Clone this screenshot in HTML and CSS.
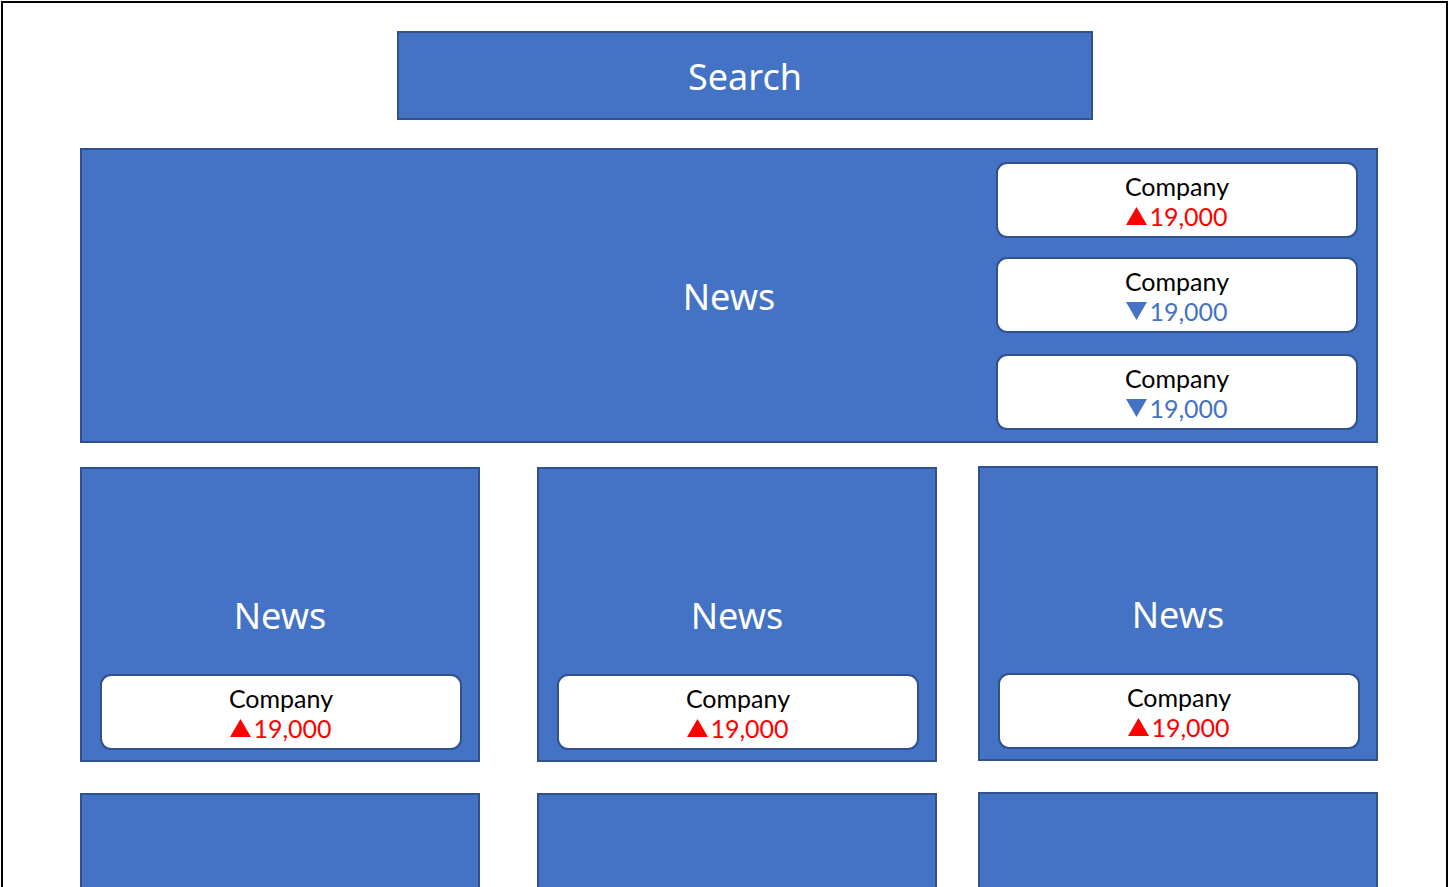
FILE: index.html
```html
<!DOCTYPE html>
<html lang="en">
<head>
<meta charset="utf-8">
<title>News Dashboard Wireframe</title>
<link rel="stylesheet" href="styles.css">
</head>
<body>
<div class="frame">
  <div class="search">Search</div>

  <div class="hero">
    <div class="hero-title">News</div>
    <div class="stock-list">
      <div class="stock">
        <div class="stock-name">Company</div>
        <div class="stock-value up"><svg class="tri" viewBox="0 0 20 17"><polygon points="10,0 20,17 0,17"/></svg>19,000</div>
      </div>
      <div class="stock">
        <div class="stock-name">Company</div>
        <div class="stock-value down"><svg class="tri" viewBox="0 0 20 17"><polygon points="0,0 20,0 10,17"/></svg>19,000</div>
      </div>
      <div class="stock stock-last">
        <div class="stock-name">Company</div>
        <div class="stock-value down"><svg class="tri" viewBox="0 0 20 17"><polygon points="0,0 20,0 10,17"/></svg>19,000</div>
      </div>
    </div>
  </div>

  <div class="row">
    <div class="tile">
      <div class="tile-title">News</div>
      <div class="stock tile-stock">
        <div class="stock-name">Company</div>
        <div class="stock-value up"><svg class="tri" viewBox="0 0 20 17"><polygon points="10,0 20,17 0,17"/></svg>19,000</div>
      </div>
    </div>
    <div class="tile tile-mid">
      <div class="tile-title">News</div>
      <div class="stock tile-stock">
        <div class="stock-name">Company</div>
        <div class="stock-value up"><svg class="tri" viewBox="0 0 20 17"><polygon points="10,0 20,17 0,17"/></svg>19,000</div>
      </div>
    </div>
    <div class="tile tile-last">
      <div class="tile-title">News</div>
      <div class="stock tile-stock">
        <div class="stock-name">Company</div>
        <div class="stock-value up"><svg class="tri" viewBox="0 0 20 17"><polygon points="10,0 20,17 0,17"/></svg>19,000</div>
      </div>
    </div>
  </div>

  <div class="row row-bottom">
    <div class="tile tile-cut"></div>
    <div class="tile tile-cut tile-mid"></div>
    <div class="tile tile-cut tile-last"></div>
  </div>
</div>
</body>
</html>
```

FILE: styles.css
```css
html, body {
  margin: 0;
  padding: 0;
  background: #ffffff;
  overflow: hidden;
}

body {
  font-family: "Noto Sans", "Open Sans", "Liberation Sans", sans-serif;
  width: 1450px;
  height: 887px;
}

.frame {
  box-sizing: border-box;
  margin: 1px 0 0 1px;
  width: 1447px;
  height: 886px;
  overflow: hidden;
  border: 2px solid #000000;
  border-bottom: none;
  padding: 28px 0 0 77px;
}

.search {
  box-sizing: border-box;
  margin-left: 317px;
  width: 696px;
  height: 89px;
  background: #4472c4;
  border: 2px solid #2f528f;
  color: #ffffff;
  font-size: 36px;
  display: flex;
  align-items: center;
  justify-content: center;
  padding-top: 2px;
}

.hero {
  box-sizing: border-box;
  margin-top: 28px;
  width: 1298px;
  height: 295px;
  background: #4472c4;
  border: 2px solid #2f528f;
  display: grid;
  grid-template-columns: 1fr auto;
}

.hero-title {
  grid-row: 1;
  grid-column: 1 / 3;
  align-self: center;
  justify-self: center;
  color: #ffffff;
  font-size: 36px;
  margin-top: 2px;
}

.stock-list {
  grid-row: 1;
  grid-column: 2;
  display: flex;
  flex-direction: column;
  padding: 12px 18px 0 0;
}

.stock {
  box-sizing: border-box;
  width: 362px;
  height: 76px;
  background: #ffffff;
  border: 2px solid #2f528f;
  border-radius: 11px;
  display: flex;
  flex-direction: column;
  align-items: center;
  justify-content: center;
  padding-top: 1px;
  margin-bottom: 19px;
  font-family: "Lato", "Noto Sans", sans-serif;
}

.stock-list .stock:nth-child(2) {
  margin-bottom: 21px;
}

.stock-last {
  margin-bottom: 0;
}

.stock-name {
  color: #000000;
  font-size: 25px;
  line-height: 30px;
}

.stock-value {
  font-size: 25px;
  line-height: 30px;
  display: flex;
  align-items: center;
}

.up {
  color: #ff0000;
}

.down {
  color: #4472c4;
}

.tri {
  width: 21px;
  height: 18px;
  margin-right: 2px;
  fill: currentColor;
}

.row {
  display: flex;
  margin-top: 24px;
}

.row-bottom {
  margin-top: 31px;
}

.tile {
  box-sizing: border-box;
  width: 400px;
  height: 295px;
  background: #4472c4;
  border: 2px solid #2f528f;
  display: grid;
}

.tile-cut {
  height: 100px;
  border-bottom: none;
}

.tile-mid {
  margin: 0 41px 0 57px;
}

.tile-last {
  margin-top: -1px;
}

.tile-title {
  grid-area: 1 / 1;
  align-self: center;
  justify-self: center;
  color: #ffffff;
  font-size: 36px;
  margin-top: 2px;
}

.tile-stock {
  grid-area: 1 / 1;
  align-self: end;
  justify-self: start;
  margin: 0 0 10px 18px;
}
```
